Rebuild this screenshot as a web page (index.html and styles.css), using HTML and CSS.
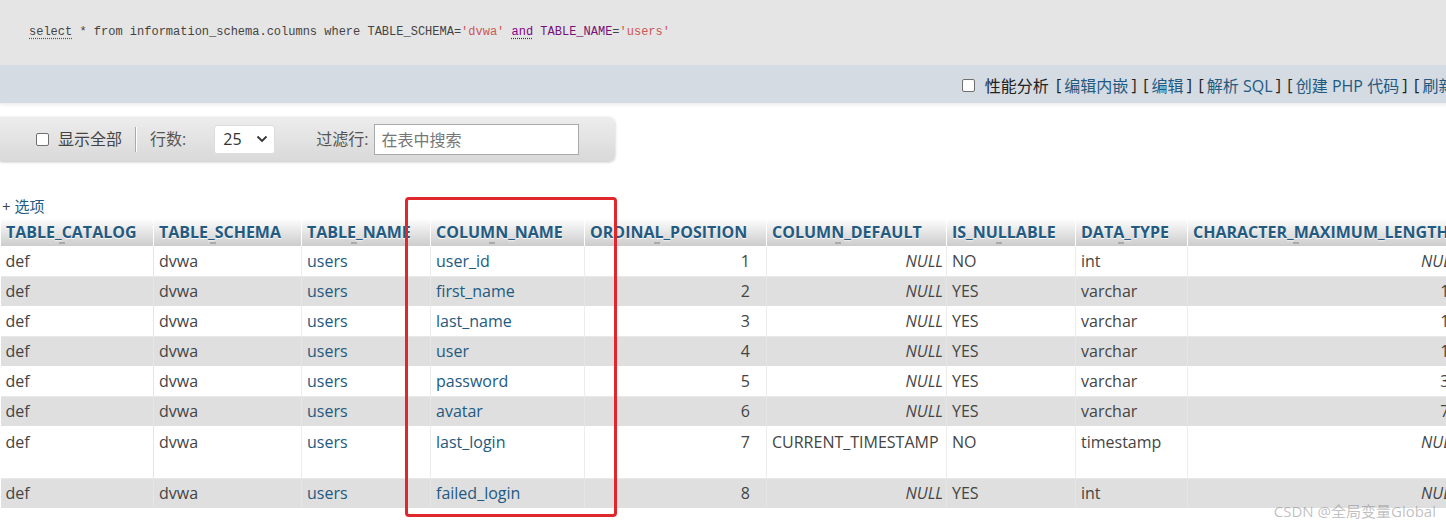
FILE: index.html
```html
<!DOCTYPE html>
<html lang="zh-CN">
<head>
<meta charset="utf-8">
<title>phpMyAdmin - 查询结果</title>
<link rel="stylesheet" href="styles.css">
</head>
<body>
<div class="sqlbox"><span class="kw-link">select</span> * from information_schema.columns where TABLE_SCHEMA=<span class="str">'dvwa'</span> <span class="kw-and">and</span> <span class="ident">TABLE_NAME</span>=<span class="str">'users'</span></div>

<div class="toolbar">
  <span class="checkbox"></span>
  <span class="tb-label">性能分析</span>
  <span class="br">[</span><a class="lnk">编辑内嵌</a><span class="br">]</span>
  <span class="br">[</span><a class="lnk">编辑</a><span class="br">]</span>
  <span class="br">[</span><a class="lnk">解析 SQL</a><span class="br">]</span>
  <span class="br">[</span><a class="lnk">创建 PHP 代码</a><span class="br">]</span>
  <span class="br">[</span><a class="lnk">刷新</a><span class="br">]</span>
</div>

<div class="filterbar">
  <span class="checkbox"></span>
  <span class="fb-text showall">显示全部</span>
  <span class="divider"></span>
  <span class="fb-text rows">行数:</span>
  <span class="select"><span class="sel-val">25</span><svg class="chev" width="12" height="8" viewBox="0 0 12 8"><polyline points="1.5,1.5 6,6 10.5,1.5" fill="none" stroke="#333" stroke-width="1.8"/></svg></span>
  <span class="fb-text filter">过滤行:</span>
  <span class="search">在表中搜索</span>
</div>

<div class="tablearea">
  <div class="options"><span class="plus">+</span> <a class="lnk">选项</a></div>
  <table class="results">
    <colgroup>
      <col class="c1"><col class="c2"><col class="c3"><col class="c4"><col class="c5"><col class="c6"><col class="c7"><col class="c8"><col class="c9">
    </colgroup>
    <thead>
      <tr>
        <th>TABLE_CATALOG</th><th>TABLE_SCHEMA</th><th>TABLE_NAME</th><th>COLUMN_NAME</th><th>ORDINAL_POSITION</th><th>COLUMN_DEFAULT</th><th>IS_NULLABLE</th><th>DATA_TYPE</th><th>CHARACTER_MAXIMUM_LENGTH</th>
      </tr>
    </thead>
    <tbody>
      <tr class="odd"><td class="first">def</td><td>dvwa</td><td class="link">users</td><td class="link">user_id</td><td class="ord">1</td><td class="null">NULL</td><td>NO</td><td>int</td><td class="null right">NULL</td></tr>
      <tr class="even"><td class="first">def</td><td>dvwa</td><td class="link">users</td><td class="link">first_name</td><td class="ord">2</td><td class="null">NULL</td><td>YES</td><td>varchar</td><td class="right">15</td></tr>
      <tr class="odd"><td class="first">def</td><td>dvwa</td><td class="link">users</td><td class="link">last_name</td><td class="ord">3</td><td class="null">NULL</td><td>YES</td><td>varchar</td><td class="right">15</td></tr>
      <tr class="even"><td class="first">def</td><td>dvwa</td><td class="link">users</td><td class="link">user</td><td class="ord">4</td><td class="null">NULL</td><td>YES</td><td>varchar</td><td class="right">15</td></tr>
      <tr class="odd"><td class="first">def</td><td>dvwa</td><td class="link">users</td><td class="link">password</td><td class="ord">5</td><td class="null">NULL</td><td>YES</td><td>varchar</td><td class="right">32</td></tr>
      <tr class="even"><td class="first">def</td><td>dvwa</td><td class="link">users</td><td class="link">avatar</td><td class="ord">6</td><td class="null">NULL</td><td>YES</td><td>varchar</td><td class="right">70</td></tr>
      <tr class="odd tall"><td class="first">def</td><td>dvwa</td><td class="link">users</td><td class="link">last_login</td><td class="ord">7</td><td>CURRENT_TIMESTAMP</td><td>NO</td><td>timestamp</td><td class="null right">NULL</td></tr>
      <tr class="even"><td class="first">def</td><td>dvwa</td><td class="link">users</td><td class="link">failed_login</td><td class="ord">8</td><td class="null">NULL</td><td>YES</td><td>int</td><td class="null right">NULL</td></tr>
    </tbody>
  </table>
  <div class="redbox"></div>
</div>

<div class="watermark">CSDN @全局变量Global</div>
</body>
</html>
```

FILE: styles.css
```css
html, body {
  margin: 0;
  padding: 0;
  overflow: hidden;
  background: #fff;
}

body {
  position: relative;
  width: 1446px;
  height: 527px;
  font-family: "Open Sans", "Noto Sans CJK SC", sans-serif;
  font-size: 16px;
  color: #444;
}

a.lnk {
  color: #235a81;
  text-decoration: none;
}

/* SQL box */
.sqlbox {
  height: 65px;
  box-sizing: border-box;
  padding: 24px 0 0 29px;
  background: #e5e5e5;
  font: 12px/16px "Liberation Mono", "DejaVu Sans Mono", monospace;
  color: #444;
  white-space: pre;
}

.kw-link {
  text-decoration: underline dotted #555;
  text-underline-offset: 3px;
}

.kw-and {
  color: #808;
  text-decoration: underline dotted #808;
  text-underline-offset: 3px;
}

.ident {
  color: #717;
}

.str {
  color: #c55;
}

/* top right toolbar */
.toolbar {
  height: 38px;
  margin-right: -20px;
  display: flex;
  justify-content: flex-end;
  align-items: center;
  background: #d4dbe2;
  box-shadow: 0 2px 3px rgba(0, 0, 0, 0.08);
  white-space: nowrap;
  padding-top: 2px;
  box-sizing: border-box;
  font-size: 16px;
  color: #222;
}

.checkbox {
  display: inline-block;
  width: 11px;
  height: 11px;
  border: 1px solid #6f6f6f;
  border-radius: 2px;
  background: #fff;
  flex: none;
}

.toolbar .checkbox {
  margin-right: 10px;
}

.tb-label {
  margin-right: 4px;
}

.toolbar .br {
  margin: 0 3.2px;
  color: #222;
}

/* filter bar */
.filterbar {
  width: 615px;
  height: 44px;
  margin-top: 14px;
  box-sizing: border-box;
  display: flex;
  align-items: center;
  padding-left: 36px;
  background: linear-gradient(#ededed, #d9d9d9);
  border-radius: 0 6px 6px 0;
  box-shadow: 0 1px 3px rgba(0, 0, 0, 0.25);
  color: #555;
}

.fb-text {
  line-height: 22px;
}

.showall {
  margin-left: 9px;
  color: #444;
}

.divider {
  width: 1px;
  height: 25px;
  margin-left: 13px;
  background: #aaa;
  box-shadow: 1px 0 0 #fff;
}

.rows {
  margin-left: 14px;
}

.select {
  display: flex;
  align-items: center;
  justify-content: space-between;
  box-sizing: border-box;
  width: 61px;
  height: 29px;
  margin-left: 28px;
  padding: 0 6px 0 8px;
  background: #fff;
  border-radius: 3px;
  border: 1px solid #ddd;
  color: #333;
}

.sel-val {
  font-size: 16px;
}

.filter {
  margin-left: 41px;
}

.search {
  display: flex;
  align-items: center;
  box-sizing: border-box;
  width: 205px;
  height: 31px;
  margin-left: 6px;
  padding-left: 6px;
  background: #fff;
  border: 1px solid #aaa;
  color: #777;
}

/* results */
.tablearea {
  position: relative;
  margin-top: 34px;
}

.options {
  height: 22px;
  line-height: 22px;
  margin-bottom: 1px;
  padding-left: 2px;
  font-size: 15px;
}

.plus {
  color: #444;
}

.results {
  border-collapse: collapse;
  table-layout: fixed;
  width: 1463px;
}

.c1 { width: 153px; }
.c2 { width: 148px; }
.c3 { width: 129px; }
.c4 { width: 154px; }
.c5 { width: 182px; }
.c6 { width: 180px; }
.c7 { width: 129px; }
.c8 { width: 112px; }
.c9 { width: 276px; }

.results th {
  position: relative;
  height: 28px;
  box-sizing: border-box;
  padding: 3px 5px;
  line-height: 22px;
  text-align: left;
  font-weight: 700;
  color: #235a81;
  text-shadow: 0 1px 0 #fff;
  background: linear-gradient(#fff, #ccc);
  border-left: 1px solid #fff;
  white-space: nowrap;
  overflow: hidden;
}

.results th::after {
  content: "";
  position: absolute;
  left: 38%;
  bottom: 2px;
  width: 6px;
  height: 2px;
  background: #aaa;
}

.results td {
  padding: 4px 5px;
  line-height: 22px;
  vertical-align: top;
  border-left: 1px solid #ececec;
  color: #444;
  white-space: nowrap;
  overflow: hidden;
}

.results td.first {
  border-left: none;
}

.results tr td:nth-child(2) {
  border-left-color: #f6e2c4;
}

.results tr.odd {
  background: #fff;
}

.results tr.even {
  background: #dfdfdf;
}

.results tr.even td {
  border-left-color: #e6e6e6;
  box-shadow: inset 0 1px 0 #e9e9e9;
}

.results td.link {
  color: #235a81;
}

.results td.ord {
  text-align: right;
  padding-right: 16px;
}

.results td.null {
  font-style: italic;
  text-align: right;
  padding-right: 3px;
}

.results td.right {
  text-align: right;
  padding-right: 5px;
}

.results tr.tall td {
  padding-top: 5px;
  padding-bottom: 25px;
}

.redbox {
  position: absolute;
  left: 405px;
  top: 2px;
  width: 212px;
  height: 320px;
  box-sizing: border-box;
  border: 3px solid #e0282c;
  border-radius: 4px;
}

.watermark {
  position: absolute;
  right: 10px;
  bottom: 6px;
  font-size: 15px;
  color: rgba(140, 140, 140, 0.55);
  white-space: nowrap;
}
```
